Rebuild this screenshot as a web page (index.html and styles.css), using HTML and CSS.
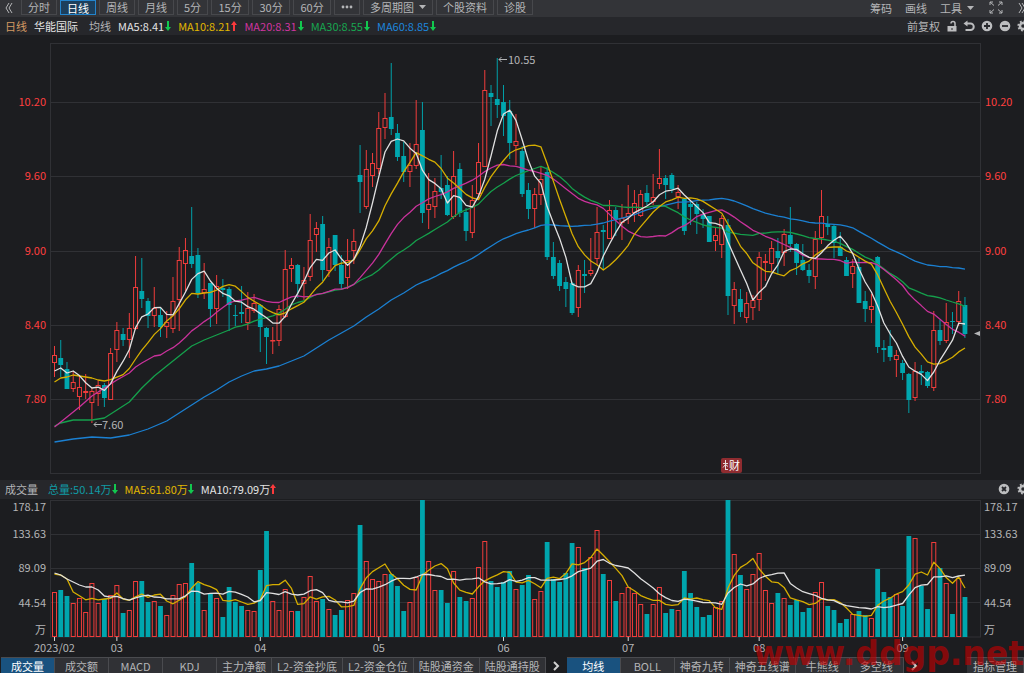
FILE: index.html
```html
<!DOCTYPE html>
<html lang="zh-CN">
<head>
    <meta charset="UTF-8">
    <meta name="viewport" content="width=device-width, initial-scale=1.0">
    <title>华能国际 日线</title>
    <link rel="stylesheet" href="styles.css">
</head>
<body>
    <header class="toolbar">
        <button class="icon-btn" aria-label="收起"><svg width="8" height="12" viewBox="0 0 8 12"><path d="M4 1L1 6l3 5M7 1L4 6l3 5"/></svg></button>
        <nav class="periods">
            <button>分时</button>
            <button class="active">日线</button>
            <button>周线</button>
            <button>月线</button>
            <button>5分</button>
            <button class="minutes">15分</button>
            <button class="minutes">30分</button>
            <button class="minutes">60分</button>
            <button aria-label="更多"><svg class="dots" width="12" height="4" viewBox="0 0 12 4"><circle cx="2" cy="2" r="1.4"/><circle cx="6" cy="2" r="1.4"/><circle cx="10" cy="2" r="1.4"/></svg></button>
            <button>多周期图<svg class="caret" width="7" height="4" viewBox="0 0 7 4"><path d="M0 0h7L3.500 4z"/></svg></button>
            <button>个股资料</button>
            <button>诊股</button>
        </nav>
        <div class="tools">
            <button>筹码</button>
            <button>画线</button>
            <button>工具<svg class="caret" width="7" height="4" viewBox="0 0 7 4"><path d="M0 0h7L3.500 4z"/></svg></button>
            <button aria-label="全屏"><svg width="14" height="13" viewBox="0 0 14 13"><path d="M1 4V1h3M1 1l4 3.500M10 1h3v3M13 1L9 4.500M1 9v3h3M1 12l4-3.500M10 12h3V9M13 12L9 8.500"/></svg></button>
            <button aria-label="展开"><svg width="8" height="12" viewBox="0 0 8 12"><path d="M1 1l3 5-3 5M4 1l3 5-3 5"/></svg></button>
        </div>
    </header>

    <div class="info-bar ma-bar">
        <span class="period">日线</span>
        <span class="stock">华能国际</span>
        <span>均线</span>
        <span class="white">MA5:8.41<svg class="down" width="6" height="10" viewBox="0 0 6 10"><path d="M2 0h2v6h2L3 10 0 6h2z"/></svg></span>
        <span class="yellow">MA10:8.21<svg class="up" width="6" height="10" viewBox="0 0 6 10"><path d="M2 10h2V4h2L3 0 0 4h2z"/></svg></span>
        <span class="pink">MA20:8.31<svg class="down" width="6" height="10" viewBox="0 0 6 10"><path d="M2 0h2v6h2L3 10 0 6h2z"/></svg></span>
        <span class="green">MA30:8.55<svg class="down" width="6" height="10" viewBox="0 0 6 10"><path d="M2 0h2v6h2L3 10 0 6h2z"/></svg></span>
        <span class="blue">MA60:8.85<svg class="down" width="6" height="10" viewBox="0 0 6 10"><path d="M2 0h2v6h2L3 10 0 6h2z"/></svg></span>
        <div class="chart-tools">
            <button>前复权</button>
            <button aria-label="锁定"><svg width="10" height="12" viewBox="0 0 10 12"><path class="solid" d="M0.500 6h9v5.500h-9z"/><path d="M4 3.500a2 2 0 0 1 4 0V6"/><path class="hole" d="M4.500 8h1v2h-1z"/></svg></button>
            <button aria-label="撤销"><svg width="12" height="12" viewBox="0 0 12 12"><path class="bold" d="M3 3.500h4.500a3 3 0 0 1 0 6.500H2.500"/><path class="solid" d="M0.500 3.500L4.500 0.500v6z"/></svg></button>
            <button aria-label="放大"><svg width="12" height="12" viewBox="0 0 12 12"><circle class="solid" cx="6" cy="6" r="5.300"/><path class="mark" d="M3 6h6M6 3v6"/></svg></button>
            <button aria-label="缩小"><svg width="12" height="12" viewBox="0 0 12 12"><circle class="solid" cx="6" cy="6" r="5.300"/><path class="mark" d="M3 6h6"/></svg></button>
            <button aria-label="设置"><svg width="12" height="12" viewBox="0 0 12 12"><circle class="cog" cx="6" cy="6" r="4.600"/><circle class="ring" cx="6" cy="6" r="3"/></svg></button>
        </div>
    </div>

    <main>
        <svg id="priceChart" class="chart" viewBox="0 35 1024 445" role="img" aria-label="华能国际日线"></svg>

        <div class="info-bar volume-bar">
            <span class="vol-title">成交量</span>
            <span class="teal">总量:50.14万<svg class="down" width="6" height="10" viewBox="0 0 6 10"><path d="M2 0h2v6h2L3 10 0 6h2z"/></svg></span>
            <span class="yellow">MA5:61.80万<svg class="down" width="6" height="10" viewBox="0 0 6 10"><path d="M2 0h2v6h2L3 10 0 6h2z"/></svg></span>
            <span class="white">MA10:79.09万<svg class="up" width="6" height="10" viewBox="0 0 6 10"><path d="M2 10h2V4h2L3 0 0 4h2z"/></svg></span>
            <div class="chart-tools">
                <button aria-label="关闭"><svg width="12" height="12" viewBox="0 0 12 12"><circle class="solid" cx="6" cy="6" r="5.300"/><path class="mark" d="M4 4l4 4M8 4l-4 4"/></svg></button>
                <button aria-label="设置"><svg width="12" height="12" viewBox="0 0 12 12"><circle class="cog" cx="6" cy="6" r="4.600"/><circle class="ring" cx="6" cy="6" r="3"/></svg></button>
            </div>
        </div>

        <svg id="volumeChart" class="chart" viewBox="0 499 1024 158" role="img" aria-label="成交量"></svg>
    </main>

    <footer class="tabs">
        <button class="active">成交量</button>
        <button>成交额</button>
        <button>MACD</button>
        <button>KDJ</button>
        <button>主力净额</button>
        <button>L2-资金抄底</button>
        <button>L2-资金仓位</button>
        <button>陆股通资金</button>
        <button>陆股通持股</button>
        <button class="next" aria-label="下一页"><svg width="7" height="10" viewBox="0 0 7 10"><path d="M1 1l4 4-4 4"/></svg></button>
        <button class="active">均线</button>
        <button>BOLL</button>
        <button>神奇九转</button>
        <button>神奇五线谱</button>
        <button>牛熊线</button>
        <button>多空线</button>
        <button class="next" aria-label="下一页"><svg width="7" height="10" viewBox="0 0 7 10"><path d="M1 1l4 4-4 4"/></svg></button>
        <button class="manage">指标管理</button>
    </footer>
    <div class="watermark">www.ddgp.net</div>

    <script src="chart.js"></script>
</body>
</html>
```

FILE: styles.css
```css
/* General */
* {
    box-sizing: border-box;
}

body {
    margin: 0;
    position: relative;
    overflow-x: hidden;
    background-color: #1c1d20;
    color: #b4b5b7;
    font-family: "Noto Sans CJK SC", sans-serif;
    font-size: 11px;
    line-height: 16px;
}

button {
    margin: 0;
    padding: 0;
    border: none;
    background: none;
    color: inherit;
    font: inherit;
    white-space: nowrap;
    cursor: pointer;
}

svg {
    flex-shrink: 0;
}

/* Top toolbar */
.toolbar {
    display: flex;
    align-items: flex-start;
    height: 17px;
    padding-left: 5px;
    overflow: hidden;
    background-color: #333438;
}

.toolbar button {
    display: flex;
    align-items: center;
    justify-content: center;
    height: 15px;
    line-height: 14px;
}

.toolbar path {
    fill: none;
    stroke: #b4b5b7;
}

.periods {
    display: flex;
    gap: 3px;
    margin-left: 8px;
}

.periods button {
    padding: 0 6px;
    border: 1px solid #47484c;
    border-top: none;
}

.periods .minutes {
    min-width: 38px;
}

.periods .active {
    border: 1px solid #2384cc;
    background-color: #1c3f5c;
    color: #ffffff;
}

.periods .dots {
    fill: #b4b5b7;
}

.toolbar .caret {
    margin-left: 5px;
}

.toolbar .caret path {
    fill: #b4b5b7;
    stroke: none;
}

.tools {
    display: flex;
    gap: 13px;
    margin-left: auto;
    margin-right: -2px;
}

.tools button {
    flex-shrink: 0;
}

.tools button:nth-child(n+4) {
    margin-left: 2px;
}

/* Indicator values */
.info-bar {
    display: flex;
    align-items: center;
    gap: 7px;
    height: 18px;
    padding-left: 5px;
    overflow: hidden;
    background-color: #26272b;
    white-space: nowrap;
}

.info-bar span {
    display: flex;
    align-items: center;
}

.ma-bar span svg {
    margin-left: 1px;
}

.volume-bar {
    height: 19px;
    padding-bottom: 1px;
}

.period {
    color: #d49a63;
}

.stock {
    margin-right: 4px;
    color: #e4e4e4;
}

.vol-title {
    margin-right: 3px;
}

.white {
    color: #e4e4e4;
}

.yellow {
    color: #e2b800;
}

.pink {
    color: #d035a0;
}

.green {
    color: #17a650;
}

.blue {
    color: #1d86dc;
}

.teal {
    color: #109ba5;
}

.down {
    fill: #12c84f;
}

.up {
    fill: #fb3a3c;
}

.chart-tools {
    display: flex;
    gap: 6px;
    margin-left: auto;
    margin-right: -5px;
}

.chart-tools button {
    display: flex;
    align-items: center;
}

.chart-tools button:first-child {
    margin-right: 1px;
}

.chart-tools path,
.chart-tools .ring {
    fill: none;
    stroke: #bcbdbf;
    stroke-width: 1.5;
}

.chart-tools .bold {
    stroke-width: 2;
}

.chart-tools .ring {
    stroke-width: 2.5;
}

.chart-tools .cog {
    fill: none;
    stroke: #bcbdbf;
    stroke-width: 2;
    stroke-dasharray: 1.8 1.8;
}

.chart-tools .solid {
    fill: #bcbdbf;
    stroke: none;
}

.chart-tools .hole {
    fill: #26272b;
    stroke: none;
}

.chart-tools .mark {
    stroke: #26272b;
    stroke-width: 1.8;
}

/* Charts */
.chart {
    display: block;
    width: 100%;
    height: auto;
}

.chart text {
    fill: #b4b5b7;
    font-size: 11px;
}

.chart .price {
    fill: #ff3f3f;
}

.grid {
    fill: none;
    stroke: #303135;
}

.tick {
    stroke: #d8d8d8;
}

.rise {
    fill: none;
    stroke: #f03c3b;
}

.fall {
    fill: #00a6ae;
}

.fall-wick {
    stroke: #00a0a8;
}

.ma {
    fill: none;
    stroke-width: 1.3;
    stroke-linejoin: round;
}

.ma-white {
    stroke: #e0e0e0;
}

.ma-yellow {
    stroke: #d6ae00;
}

.ma-pink {
    stroke: #c9329b;
}

.ma-green {
    stroke: #15a04c;
}

.ma-blue {
    stroke: #1b80d2;
}

.note {
    fill: none;
    stroke: #b4b5b7;
}

.pointer {
    fill: #b4b5b7;
}

.badge {
    fill: #8f2c30;
}

.badge-mark {
    fill: none;
    stroke: #e8dcdc;
}

.chart .badge-text {
    fill: #ffffff;
}

/* Bottom tabs */
.tabs {
    display: flex;
    height: 16px;
    padding-left: 1px;
    overflow: hidden;
    background-color: #1c1d20;
}

.tabs button {
    flex-shrink: 0;
    min-width: 54px;
    height: 17px;
    padding: 0 5px;
    border-top: 1px solid #4a4b4f;
    border-right: 1px solid #4a4b4f;
    background-color: #303135;
}

.tabs .active {
    background-color: #19527f;
    color: #ffffff;
}

.tabs .next {
    min-width: 21px;
    padding: 0 4px;
    border: none;
    background: none;
}

.tabs .next path {
    fill: none;
    stroke: #d0d0d0;
    stroke-width: 2;
}

.tabs .manage {
    margin-left: auto;
    min-width: 57px;
}

.watermark {
    position: absolute;
    right: 0;
    bottom: 0;
    color: #c40000;
    font-family: "DejaVu Sans", sans-serif;
    font-size: 33px;
    font-weight: bold;
    line-height: 38px;
    opacity: 0.62;
    pointer-events: none;
}
```

FILE: chart.js
```js
// high, body top, body bottom, low, volume top, 1 = up / 0 = down (chart units)
const bars = [
    [346,355,363,377,592,1], [340,358,365,377,590,0], [362,369,389,389,596,0], [371,382,389,392,603,1],
    [375,387,397,410,598,1], [374,391,393,399,612,1], [388,391,403,423,583,1], [380,385,394,406,603,1],
    [383,385,398,407,599,0], [348,353,400,400,595,1], [322,330,350,362,585,1], [328,334,340,346,613,0],
    [313,328,340,358,610,1], [256,287,329,330,581,1], [258,291,299,308,581,0], [298,301,316,328,602,0],
    [287,308,316,327,601,1], [308,315,327,337,606,0], [311,322,327,338,615,1], [277,301,329,333,595,1],
    [247,260,300,331,584,1], [238,250,264,292,583,1], [207,256,264,268,563,0], [248,255,293,298,583,0],
    [263,289,293,299,610,1], [283,283,309,327,594,0], [275,286,309,324,598,1], [279,288,290,297,617,0],
    [287,289,305,331,587,0], [305,315,316,326,602,0], [286,312,314,323,606,0], [292,308,323,330,610,1],
    [294,303,311,313,611,1], [304,305,327,352,570,0], [327,328,337,364,531,0], [327,340,341,354,601,1],
    [305,309,341,346,610,1], [250,269,317,318,589,1], [258,265,269,282,611,1], [264,265,284,298,611,0],
    [267,280,284,300,597,1], [214,240,277,281,576,1], [222,228,235,252,601,1], [216,224,270,281,599,0],
    [238,247,271,277,609,1], [235,235,265,271,615,0], [255,265,284,289,610,0], [239,260,278,289,600,1],
    [229,241,251,264,593,1], [145,175,182,213,525,0], [150,169,207,209,561,1], [153,163,176,187,579,1],
    [112,128,169,174,581,1], [93,118,128,139,574,1], [63,117,129,135,574,0], [124,133,157,161,586,0],
    [142,156,172,182,611,0], [143,165,172,187,602,1], [100,144,166,169,577,1], [102,130,213,223,500,0],
    [173,204,210,229,561,1], [178,191,207,218,590,1], [155,188,192,199,590,0], [176,185,215,216,603,0],
    [151,176,217,219,571,1], [163,169,213,217,597,0], [208,212,231,241,601,0], [185,200,233,238,598,1],
    [143,162,194,199,567,1], [70,90,167,167,541,1], [85,93,97,126,581,0], [58,99,105,118,587,0],
    [85,102,116,136,582,0], [100,111,143,159,571,0], [114,141,146,165,589,1], [146,151,194,197,585,0],
    [183,190,209,219,575,0], [188,194,209,228,599,1], [167,179,195,205,591,1], [167,172,257,260,542,0],
    [242,257,276,279,579,0], [260,263,286,291,582,0], [277,282,289,307,573,0], [282,283,313,315,543,0],
    [265,270,308,317,547,1], [260,274,276,293,568,0], [238,270,274,276,557,1], [207,232,259,264,530,1],
    [225,230,232,269,574,0], [200,210,239,239,580,1], [207,210,219,236,601,0], [204,218,223,240,593,1],
    [185,213,217,224,587,1], [190,203,213,222,593,1], [190,194,216,217,604,1], [185,193,202,205,614,0],
    [174,197,202,205,604,1], [149,178,184,189,587,1], [175,178,185,199,613,0], [173,175,189,193,609,0],
    [185,192,197,209,610,1], [198,199,231,235,571,0], [202,204,207,225,593,0], [202,204,214,234,607,0],
    [209,214,219,228,617,0], [216,216,242,242,615,0], [228,235,241,251,607,1], [215,218,245,258,601,1],
    [219,225,296,315,500,0], [282,289,306,324,554,1], [289,299,312,317,575,0], [292,303,318,323,589,1],
    [295,300,308,320,574,1], [252,257,300,311,553,1], [254,261,263,281,590,1], [241,248,264,271,603,1],
    [238,251,258,274,593,0], [229,234,253,266,598,1], [207,235,244,252,605,0], [243,244,263,275,600,0],
    [244,260,270,271,612,0], [264,270,276,283,608,0], [231,239,277,289,592,1], [190,216,238,244,582,1],
    [216,224,227,235,606,0], [224,226,243,258,610,0], [232,247,256,256,623,0], [257,260,276,276,619,0],
    [259,266,274,288,614,1], [258,267,303,303,611,0], [291,301,309,322,615,0], [294,306,310,323,618,1],
    [256,257,347,353,569,0], [340,348,350,362,592,0], [330,346,357,361,597,0], [350,355,360,377,594,1],
    [360,363,373,380,606,0], [373,374,400,413,536,0], [362,371,398,401,538,1], [365,371,373,385,586,0],
    [371,372,386,388,609,0], [311,330,388,391,542,1], [320,330,341,345,568,0], [303,322,341,343,583,1],
    [312,321,322,334,614,0], [291,301,322,326,578,1], [297,305,334,338,597,0]
];

const STEP = 6.236;
const LEFT = 54.5;
const xOf = i => LEFT + STEP * i;

const closes = bars.map(b => b[5] ? b[1] : b[2]);
const volumes = bars.map(b => b[4]);

// Moving average; lead holds [index, value] points for the days before a full window exists
function average(values, n, lead) {
    const points = lead.map(([i, y]) => `${xOf(i).toFixed(1)},${y}`);
    for (let i = n - 1; i < values.length; i++) {
        const sum = values.slice(i - n + 1, i + 1).reduce((a, b) => a + b, 0);
        points.push(`${xOf(i).toFixed(1)},${(sum / n).toFixed(1)}`);
    }
    return points.join(' ');
}

function maLine(color, values, n, lead) {
    return `<polyline class="ma ma-${color}" points="${average(values, n, lead)}"/>`;
}

function drawPrices() {
    let svg = '<rect class="grid" x="50.5" y="43.5" width="930" height="430"/>';
    [['10.20', 102], ['9.60', 176], ['9.00', 251], ['8.40', 325], ['7.80', 399]].forEach(([label, y]) => {
        svg += `<path class="grid" d="M50 ${y + 0.5}H980"/>`;
        svg += `<text class="price" x="46" y="${y + 4}" text-anchor="end">${label}</text>`;
        svg += `<text class="price" x="985" y="${y + 4}">${label}</text>`;
    });

    bars.forEach(([high, top, bottom, low, , up], i) => {
        const x = xOf(i);
        if (up) {
            svg += `<path class="rise" d="M${x} ${high}V${top}M${x} ${bottom}V${low}"/>`;
            svg += `<rect class="rise" x="${x - 2}" y="${top + 0.5}" width="4" height="${Math.max(bottom - top - 1, 0.5)}"/>`;
        } else {
            svg += `<path class="fall-wick" d="M${x} ${high}V${low}"/>`;
            svg += `<rect class="fall" x="${x - 2.4}" y="${top}" width="4.8" height="${bottom - top}"/>`;
        }
    });

    svg += maLine('blue', closes, 60, [[0,442],[3,439],[6,437],[9,438],[12,435],[15,429],[18,421],[20,413],[22,405],[24,397],[26,390],[28,382],[30,376],[32,371],[34,369],[36,366],[38,361],[40,356],[42,348],[44,340],[46,333],[48,326],[50,317],[52,309],[54,300],[56,293],[58,285]]);
    svg += maLine('green', closes, 30, [[0,426],[1,423],[3,420],[6,420],[8,418],[10,410],[12,402],[14,388],[16,376],[18,366],[20,356],[22,346],[24,340],[26,335],[28,330]]);
    svg += maLine('pink', closes, 20, [[0,427],[2,417],[4,407],[6,396],[8,388],[10,380],[12,373],[13,367],[14,363],[16,356],[17,355],[18,351]]);
    svg += maLine('yellow', closes, 10, [[0,382],[1,378],[2,377],[3,375],[4,376],[5,377],[6,378],[7,380],[8,381]]);
    svg += maLine('white', closes, 5, [[0,371],[1,368],[2,373],[3,371]]);

    // Highest and lowest price
    svg += '<path class="note" d="M507 59.5H499M501.500 57l-2.500 2.500 2.500 2.500"/><text x="508" y="64">10.55</text>';
    svg += '<path class="note" d="M102 424.5H94M96.500 422l-2.500 2.500 2.500 2.500"/><text x="102" y="429">7.60</text>';
    svg += '<path class="pointer" d="M974 333.500l6-2.500v5z"/>';

    // Earnings badge
    svg += '<rect class="badge" x="721" y="458" width="21" height="15" rx="2"/>';
    svg += '<path class="badge-mark" d="M723 463.500h5M725.500 460v10M723 467.500l2.500-3 2.500 2M726 469.500h2"/>';
    svg += '<text class="badge-text" x="729" y="470">财</text>';
    document.getElementById('priceChart').innerHTML = svg;
}

function drawVolumes() {
    const base = 637;
    let svg = '<rect class="grid" x="50.5" y="500.5" width="930" height="136.5"/>';
    svg += '<path class="grid" d="M50 534.5H980M50 568.5H980M50 602.5H980"/>';
    [['178.17', 511], ['133.63', 538], ['89.09', 572], ['44.54', 607], ['万', 634]].forEach(([label, y]) => {
        svg += `<text x="46" y="${y}" text-anchor="end">${label}</text><text x="984" y="${y}">${label}</text>`;
    });

    bars.forEach((bar, i) => {
        const x = xOf(i);
        const y = bar[4];
        if (bar[5]) {
            svg += `<rect class="rise" x="${x - 2}" y="${y + 0.5}" width="4" height="${base - y - 1}"/>`;
        } else {
            svg += `<rect class="fall" x="${x - 2.4}" y="${y}" width="4.8" height="${base - y}"/>`;
        }
    });

    svg += maLine('yellow', volumes, 5, [[0,574],[1,575],[2,579],[3,592]]);
    svg += maLine('white', volumes, 10, [[0,573],[1,575],[2,579],[3,582],[4,585],[5,587],[6,587],[7,590],[8,596]]);

    [['2023/02', 0], ['03', 10], ['04', 33], ['05', 52], ['06', 72], ['07', 92], ['08', 113], ['09', 136]].forEach(([label, i]) => {
        svg += `<path class="tick" d="M${xOf(i)} 637v4"/><text x="${xOf(i)}" y="652" text-anchor="middle">${label}</text>`;
    });
    document.getElementById('volumeChart').innerHTML = svg;
}

drawPrices();
drawVolumes();
```
